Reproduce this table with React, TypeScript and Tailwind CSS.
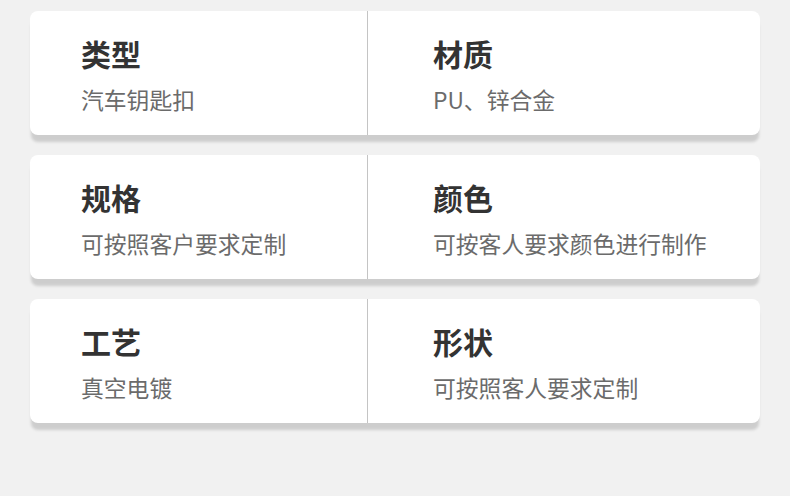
import React from 'react';

const rows = [
  [
    { title: '类型', value: '汽车钥匙扣' },
    { title: '材质', value: 'PU、锌合金' },
  ],
  [
    { title: '规格', value: '可按照客户要求定制' },
    { title: '颜色', value: '可按客人要求颜色进行制作' },
  ],
  [
    { title: '工艺', value: '真空电镀' },
    { title: '形状', value: '可按照客人要求定制' },
  ],
];

function Cell({ title, value, className }: { title: string; value: string; className: string }) {
  return (
    <div className={className}>
      <div className="text-[30px] leading-[30px] font-bold text-[#333333]">{title}</div>
      <div className="mt-[20px] text-[22.8px] leading-[24px] text-[#6b6b6b]">{value}</div>
    </div>
  );
}

export default function App() {
  return (
    <div
      className="w-[790px] h-[496px] bg-[#f1f1f1] pt-[11px] px-[30px] flex flex-col gap-[20px] overflow-hidden"
      style={{ fontFamily: '"Noto Sans CJK SC", "Noto Sans", sans-serif' }}
    >
      {rows.map((row, i) => (
        <div
          key={i}
          className="h-[124px] bg-white rounded-[8px] flex shadow-[0_8px_3px_-1px_rgba(0,0,0,0.15)]"
        >
          <Cell
            title={row[0].title}
            value={row[0].value}
            className="w-[338px] border-r border-[#c4c4c4] pl-[51px] pt-[27px]"
          />
          <Cell title={row[1].title} value={row[1].value} className="flex-1 pl-[65px] pt-[27px]" />
        </div>
      ))}
    </div>
  );
}
